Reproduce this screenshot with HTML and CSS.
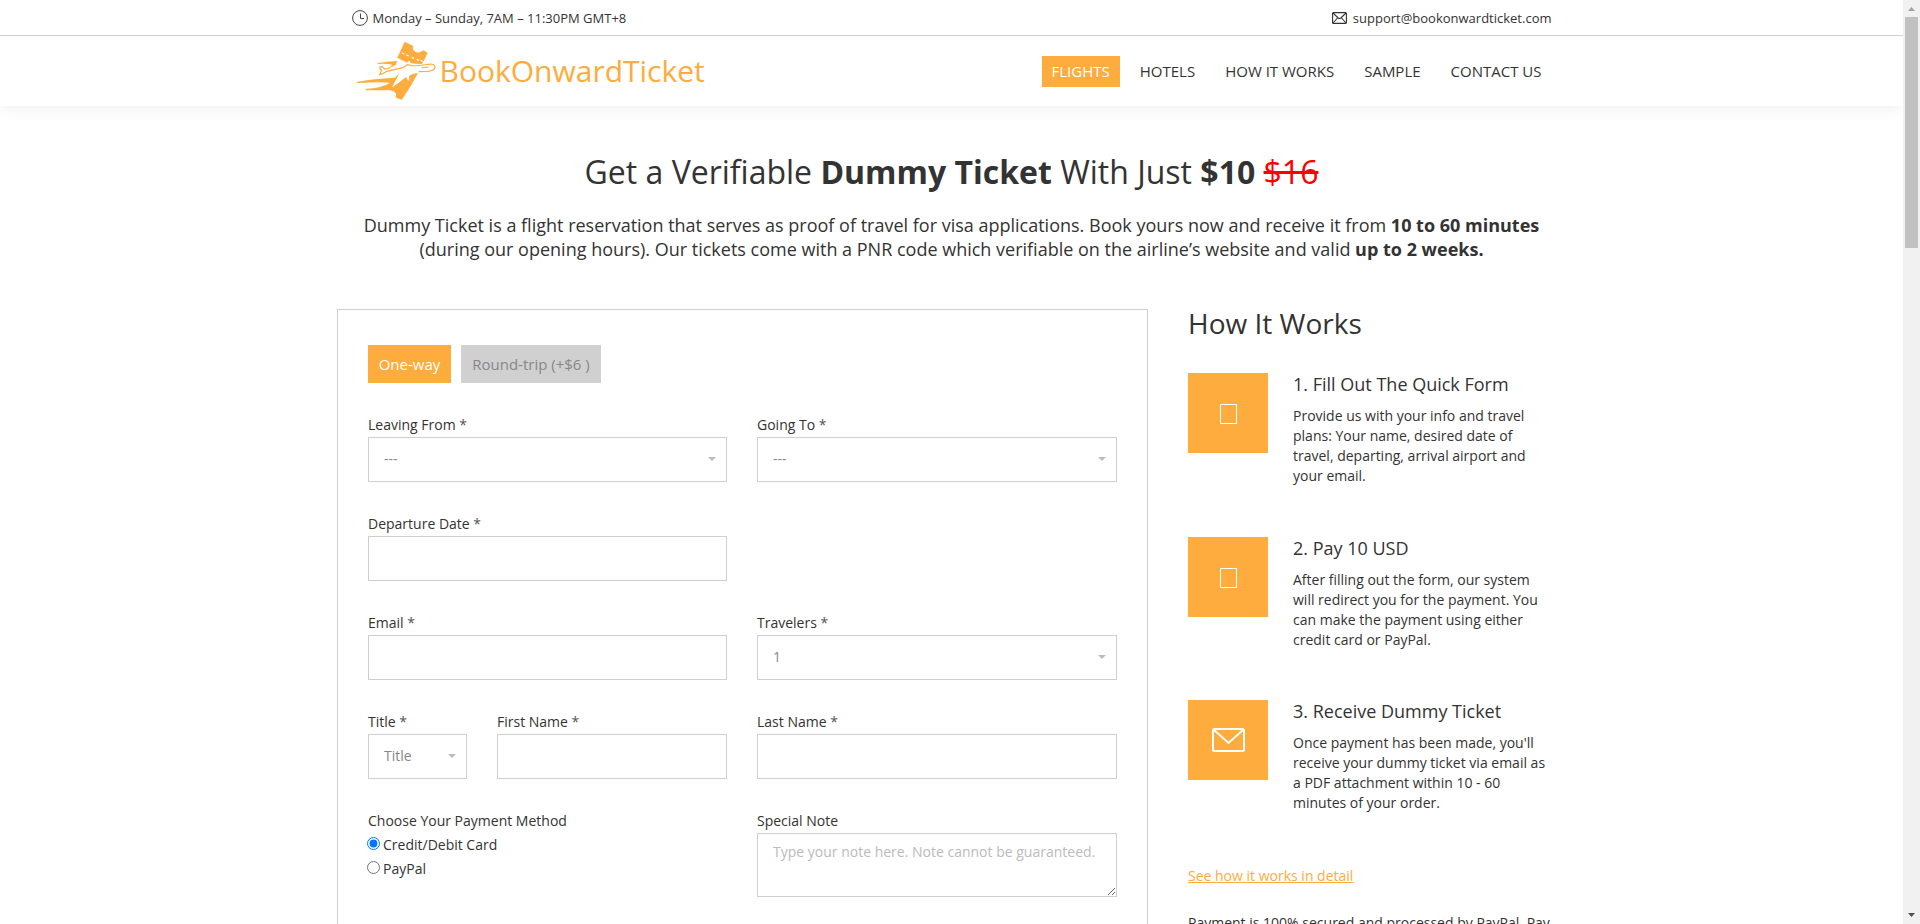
FILE: index.html
```html
<!DOCTYPE html>
<html lang="en">
<head>
<meta charset="utf-8">
<title>BookOnwardTicket</title>
<link rel="stylesheet" href="styles.css">
</head>
<body>
<div class="window">
<div class="page">
  <header class="header">
    <div class="topbar">
      <div class="container topbar-inner">
        <span class="contact"><svg class="icon-clock" viewBox="0 0 16 16"><circle cx="8" cy="8" r="7.4"/><path d="M8.500 3.500V8.500H12"/></svg>Monday – Sunday, 7AM – 11:30PM GMT+8</span>
        <span class="contact mail"><svg class="icon-mail" viewBox="0 0 15 12"><rect x=".6" y=".6" width="13.8" height="10.8" rx="1"/><path d="M1 1l5.200 5q1.300 1 2.600 0L14 1M1 11l4.500-5M14 11L9.500 6"/></svg>support@bookonwardticket.com</span>
      </div>
    </div>
    <div class="container navbar">
      <a class="brand">
        <svg class="logo" viewBox="78 124 240 180">
          <path class="fill" d="M224 126L250 139Q246 148 253 154Q263 163 275 155L280 152L293 159Q286 176 276 193L255 192L242 190Q238 178 231 189L202 174Z"/>
          <path class="hole" d="M216 160l7 3M229 166l8 3M245 173l7 3M260 179l8 3M272 182l6 3"/>
          <path class="fill" d="M264 220Q242 262 215 301L196 293Q202 284 193 276Q180 268 163 272L107 272L107 268Q152 266 180 250Q168 245 80 250L80 247Q130 237 194 234L208 221L190 255Q185 260 188 262L213 244L228 232L234 243L238 242L237 229Q250 220 264 220Z"/>
          <path class="fill" d="M143 193L143 190Q174 186 201 184L197 196L176 206L187 195Q170 191 143 193Z"/>
          <path class="line" d="M148 204L155 212L149 225Q162 220 168 216L205 207Q222 205 232 195L252 199M148 202L157 201L164 208L180 205M252 199Q280 196 303 193Q316 195 315 204Q313 213 294 215L266 216M276 204l20-2"/>
        </svg>
        <span class="brand-name">BookOnwardTicket</span>
      </a>
      <nav class="nav">
        <a class="nav-link active">FLIGHTS</a>
        <a class="nav-link">HOTELS</a>
        <a class="nav-link">HOW IT WORKS</a>
        <a class="nav-link">SAMPLE</a>
        <a class="nav-link">CONTACT US</a>
      </nav>
    </div>
  </header>

  <section class="container intro">
    <h1>Get a Verifiable <b>Dummy Ticket</b> With Just <b>$10</b> <s>$16</s></h1>
    <p>Dummy Ticket is a flight reservation that serves as proof of travel for visa applications. Book yours now and receive it from <b>10 to 60 minutes</b><br>(during our opening hours). Our tickets come with a PNR code which verifiable on the airline’s website and valid <b>up to 2 weeks.</b></p>
  </section>

  <main class="main">
    <form class="booking">
      <div class="tabs">
        <button type="button" class="tab selected">One-way</button>
        <button type="button" class="tab">Round-trip (+$6 )</button>
      </div>
      <div class="fields">
        <label class="field"><span>Leaving From <i>*</i></span><span class="control select">---</span></label>
        <label class="field"><span>Going To <i>*</i></span><span class="control select">---</span></label>
        <label class="field"><span>Departure Date <i>*</i></span><input class="control"></label>
        <div class="field"></div>
        <label class="field"><span>Email <i>*</i></span><input class="control"></label>
        <label class="field"><span>Travelers <i>*</i></span><span class="control select">1</span></label>
        <div class="name-row">
          <label class="field title-field"><span>Title <i>*</i></span><span class="control select">Title</span></label>
          <label class="field first-field"><span>First Name <i>*</i></span><input class="control"></label>
        </div>
        <label class="field"><span>Last Name <i>*</i></span><input class="control"></label>
        <div class="field payment">
          <span>Choose Your Payment Method</span>
          <label class="choice"><input type="radio" name="pay" checked>Credit/Debit Card</label>
          <label class="choice"><input type="radio" name="pay">PayPal</label>
        </div>
        <label class="field"><span>Special Note</span><textarea class="control note" placeholder="Type your note here. Note cannot be guaranteed."></textarea></label>
      </div>
    </form>

    <aside class="works">
      <h2>How It Works</h2>
      <div class="step">
        <div class="step-icon"><span class="glyph-box"></span></div>
        <div class="step-text"><h3>1. Fill Out The Quick Form</h3><p>Provide us with your info and travel<br>plans: Your name, desired date of<br>travel, departing, arrival airport and<br>your email.</p></div>
      </div>
      <div class="step">
        <div class="step-icon"><span class="glyph-box"></span></div>
        <div class="step-text"><h3>2. Pay 10 USD</h3><p>After filling out the form, our system<br>will redirect you for the payment. You<br>can make the payment using either<br>credit card or PayPal.</p></div>
      </div>
      <div class="step">
        <div class="step-icon"><svg class="icon-envelope" viewBox="0 0 33 24"><rect x="1" y="1" width="31" height="22" rx="1.500"/><path d="M2 2L16.500 15L31 2"/></svg></div>
        <div class="step-text"><h3>3. Receive Dummy Ticket</h3><p>Once payment has been made, you'll<br>receive your dummy ticket via email as<br>a PDF attachment within 10 - 60<br>minutes of your order.</p></div>
      </div>
      <a class="detail-link">See how it works in detail</a>
      <p class="secure">Payment is 100% secured and processed by PayPal. Pay</p>
    </aside>
  </main>
</div>
<div class="scrollbar">
  <svg class="arrow" viewBox="0 0 17 17"><path d="M5 11L8.500 7L12 11Z"/></svg>
  <div class="thumb"></div>
  <svg class="arrow arrow-down" viewBox="0 0 17 17"><path d="M5 6L8.500 10L12 6Z"/></svg>
</div>
</div>
</body>
</html>
```
FILE: styles.css
```css
* { box-sizing: border-box; }
body { margin: 0; background: #fff; color: #333; font: 14px/20px "Open Sans", sans-serif; }
h1, h2, h3, p { margin: 0; font-weight: 400; }
.window { display: flex; width: 1920px; height: 924px; overflow: hidden; }
.page { width: 1903px; height: 924px; overflow: hidden; }
.container { width: 1200px; margin: 0 auto; }

.header { height: 106px; box-shadow: 0 2px 14px rgba(0, 0, 0, .07); }
.topbar { height: 36px; border-bottom: 1px solid #cfcfcf; }
.topbar-inner { display: flex; justify-content: space-between; align-items: center; height: 36px; font-size: 13px; }
.contact { display: flex; align-items: center; gap: 5px; }
.contact.mail { gap: 6px; }
.icon-clock { width: 16px; height: 16px; fill: none; stroke: #444; stroke-width: 1; }
.icon-mail { width: 15px; height: 12px; fill: none; stroke: #333; stroke-width: 1.1; }
.navbar { display: flex; justify-content: space-between; align-items: center; height: 70px; }
.brand { display: flex; align-items: center; padding-left: 4px; color: #fdac3d; }
.logo { width: 80px; height: 60px; }
.logo .fill { fill: #fdac3d; }
.logo .line { fill: none; stroke: #fdac3d; stroke-width: 3.500; }
.logo .hole { stroke: #fff; stroke-width: 4; }
.brand-name { margin-left: 4px; font-size: 30px; line-height: 40px; }
.nav { display: flex; }
.nav-link { margin-left: 10px; padding: 0 10px; font-size: 15px; line-height: 31px; }
.nav-link.active { background: #fdac3d; color: #fff; }

.intro { padding-top: 46px; text-align: center; }
.intro h1 { font-size: 32px; line-height: 40px; }
.intro s { color: #f00; }
.intro p { margin-top: 21px; font-size: 18px; line-height: 24px; white-space: nowrap; }

.main { display: flex; align-items: flex-start; gap: 40px; width: 1229px; margin: 48px auto 0; }
.booking { flex: none; width: 811px; height: 700px; padding: 35px 30px; border: 1px solid #cfcfcf; }
.tabs { display: flex; gap: 10px; }
.tab { height: 38px; width: 140px; padding: 0; border: 0; background: #d0d0d0; color: #888; font: 15px "Open Sans", sans-serif; }
.tab.selected { width: 83px; background: #fdac3d; color: #fff; }
.fields { display: grid; grid-template-columns: 359px 360px; column-gap: 30px; row-gap: 30px; margin-top: 30px; }
.field { display: flex; flex-direction: column; height: 69px; line-height: 24px; }
.field i { font-style: normal; color: #555; }
.control { width: 100%; height: 45px; border: 1px solid #cfcfcf; background: #fff; padding: 0 15px; font: 14px/41px "Open Sans", sans-serif; color: #888; }
.select { display: flex; justify-content: space-between; align-items: flex-start; padding-right: 10px; }
.select::after { content: ""; margin-top: 19px; border: 4px solid transparent; border-top-color: #bbb; border-bottom: 0; }
.name-row { display: flex; gap: 30px; }
.title-field { width: 99px; }
.first-field { width: 230px; }
.note { flex: none; height: 64px; padding: 7px 15px; line-height: 22px; resize: both; }
.note::placeholder { color: #bbb; }
.choice { display: flex; align-items: flex-start; }
.choice input { margin: 4px 3px 0 -1px; }

.works { width: 378px; white-space: nowrap; }
.works h2 { height: 64px; font-size: 28px; line-height: 28px; }
.step { display: flex; gap: 25px; height: 163.600px; }
.step-icon { display: flex; align-items: center; justify-content: center; width: 80px; height: 80px; background: #fdac3d; }
.glyph-box { width: 17px; height: 20px; margin-top: 2px; border: 1px solid #fff; }
.icon-envelope { width: 33px; height: 24px; fill: none; stroke: #fff; stroke-width: 2; }
.step h3 { font-size: 18px; line-height: 22px; }
.step p { margin-top: 11px; }
.detail-link { display: block; margin-top: 2.200px; color: #fdac3d; text-decoration: underline; }
.secure { margin-top: 27px; }

.scrollbar { display: flex; flex-direction: column; align-items: center; width: 17px; height: 924px; background: #f1f1f1; }
.arrow { width: 17px; height: 17px; fill: #a3a3a3; }
.arrow-down { margin-top: auto; fill: #505050; }
.thumb { width: 13px; height: 231px; background: #c1c1c1; }
```
